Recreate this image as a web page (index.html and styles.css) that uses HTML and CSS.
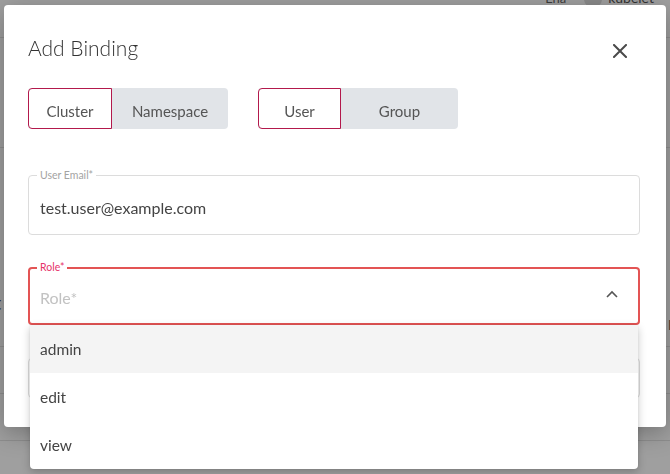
FILE: index.html
```html
<!DOCTYPE html>
<html>
<head>
<meta charset="utf-8">
<link rel="stylesheet" href="styles.css">
</head>
<body>
<div class="page">
  <div class="topbar">
    <span class="tb-link">Ena</span>
    <span class="avatar"></span>
    <span class="tb-user">kubelet</span>
  </div>
  <div class="prow prow-a"><span class="frag-left">s</span></div>
  <div class="prow prow-b"><span class="frag-left big">t</span><span class="frag-right">F</span></div>
  <div class="prow prow-c"></div>
  <div class="prow prow-d"></div>
</div>

<div class="modal">
  <div class="modal-head">
    <h2 class="modal-title">Add Binding</h2>
    <button class="close-btn" aria-label="Close">
      <svg width="14" height="14" viewBox="0 0 14 14"><path d="M1 1L13 13M13 1L1 13" stroke="#4a4a4a" stroke-width="2" stroke-linecap="square"/></svg>
    </button>
  </div>

  <div class="toggles">
    <div class="seg">
      <button class="seg-btn active w84">Cluster</button>
      <button class="seg-btn w116">Namespace</button>
    </div>
    <div class="seg">
      <button class="seg-btn active w83">User</button>
      <button class="seg-btn w117">Group</button>
    </div>
  </div>

  <div class="field email">
    <span class="field-label">User Email*</span>
    <div class="field-value">test.user@example.com</div>
  </div>

  <div class="field role">
    <span class="field-label">Role*</span>
    <div class="field-value placeholder">Role*</div>
    <svg class="chevron" width="12" height="8" viewBox="0 0 12 8"><path d="M1 7L6 2L11 7" fill="none" stroke="#555" stroke-width="1.6"/></svg>
    <ul class="menu">
      <li class="menu-item hover">admin</li>
      <li class="menu-item">edit</li>
      <li class="menu-item">view</li>
    </ul>
  </div>

  <div class="field hidden-field"></div>
</div>
</body>
</html>
```
FILE: styles.css
```css
* { box-sizing: border-box; }
html, body { margin: 0; padding: 0; }
body {
  width: 670px;
  height: 474px;
  overflow: hidden;
  background: #9f9f9f;
  font-family: Lato, "Open Sans", sans-serif;
  color: #444;
}

/* page behind the modal */
.page { display: flex; flex-direction: column; }
.topbar {
  height: 47px;
  margin-top: -9px;
  border-bottom: 1px solid #8e8e8e;
  display: flex;
  align-items: flex-start;
  justify-content: flex-end;
  gap: 6px;
  padding-right: 16px;
}
.tb-link { color: #3c3c3c; font-size: 13px; margin-right: 12px; margin-top: -1px; }
.avatar { width: 18px; height: 18px; border-radius: 50%; background: #8a8a8a; margin-top: -1px; }
.tb-user { color: #333; font-size: 14px; margin-top: -2px; }
.prow { border-bottom: 1px solid #8e8e8e; display: flex; justify-content: space-between; align-items: flex-start; }
.prow-a { height: 110px; padding-top: 20px; }
.prow-b { height: 199px; }
.prow-c { height: 47px; }
.prow-d { height: 47px; }
.frag-left { color: #333; font-size: 14px; margin-left: -7px; }
.prow-b .frag-left { margin-top: 142px; font-size: 20px; margin-left: -6px; }
.frag-right { color: #333; font-size: 14px; margin-top: 168px; margin-right: -6px; }

/* modal */
.modal {
  position: fixed;
  left: 4px;
  top: 5px;
  width: 662px;
  height: 422px;
  background: #fff;
  border-radius: 4px;
  box-shadow: 0 6px 24px rgba(0,0,0,0.28);
  padding: 30px 26px 28px 24px;
  display: flex;
  flex-direction: column;
}
.modal-head {
  display: flex;
  align-items: center;
  justify-content: space-between;
  height: 26px;
}
.modal-title {
  margin: 0;
  font-size: 21px;
  font-weight: 300;
  color: #333;
  line-height: 26px;
}
.close-btn {
  border: 0;
  background: transparent;
  padding: 0;
  width: 14px;
  height: 14px;
  margin-right: 13px;
  margin-top: 6px;
  display: flex;
}

.toggles {
  display: flex;
  gap: 30px;
  margin-top: 27px;
}
.seg {
  display: flex;
  background: #e1e4e8;
  border-radius: 4px;
  height: 41px;
}
.seg-btn {
  border: 1px solid transparent;
  background: transparent;
  border-radius: 4px;
  font-family: Lato, "Open Sans", sans-serif;
  font-size: 15px;
  color: #555;
  padding: 5px 0 0;
  height: 41px;
}
.seg-btn.active {
  background: #fff;
  border-color: #b3194c;
  border-top-right-radius: 0;
  border-bottom-right-radius: 0;
}
.w84 { width: 84px; }
.w116 { width: 116px; }
.w83 { width: 83px; }
.w117 { width: 117px; }

.field {
  position: relative;
  border: 1px solid #dcdcdc;
  border-radius: 4px;
  display: flex;
  align-items: center;
  padding: 4px 11px 0;
}
.field-label {
  position: absolute;
  left: 8px;
  top: -7px;
  background: #fff;
  padding: 0 3px;
  font-size: 10.5px;
  line-height: 12px;
  color: #a3a3a3;
}
.field-value { font-size: 16px; color: #444; }
.email { height: 60px; margin-top: 46px; }
.role {
  height: 58px;
  margin-top: 32px;
  border: 2px solid #e35454;
  padding: 2px 10px 0;
}
.role .field-label { left: 7px; top: -8px; color: #e6336a; }
.placeholder { color: #c2c2c2; flex: 1; }
.chevron { margin-right: 10px; margin-top: -6px; }

.menu {
  position: absolute;
  left: 0;
  right: 0;
  top: calc(100% + 2px);
  margin: 0;
  padding: 0;
  list-style: none;
  background: #fff;
  border-radius: 0 0 4px 4px;
  box-shadow: 0 3px 8px rgba(0,0,0,0.22), 0 0 2px rgba(0,0,0,0.08);
  height: 144px;
  display: flex;
  flex-direction: column;
  z-index: 2;
}
.menu-item {
  flex: 1;
  display: flex;
  align-items: center;
  padding: 0 10px;
  font-size: 15.5px;
  color: #444;
}
.menu-item.hover { background: #f4f4f4; }

.hidden-field { height: 40px; margin-top: 33px; }
```
